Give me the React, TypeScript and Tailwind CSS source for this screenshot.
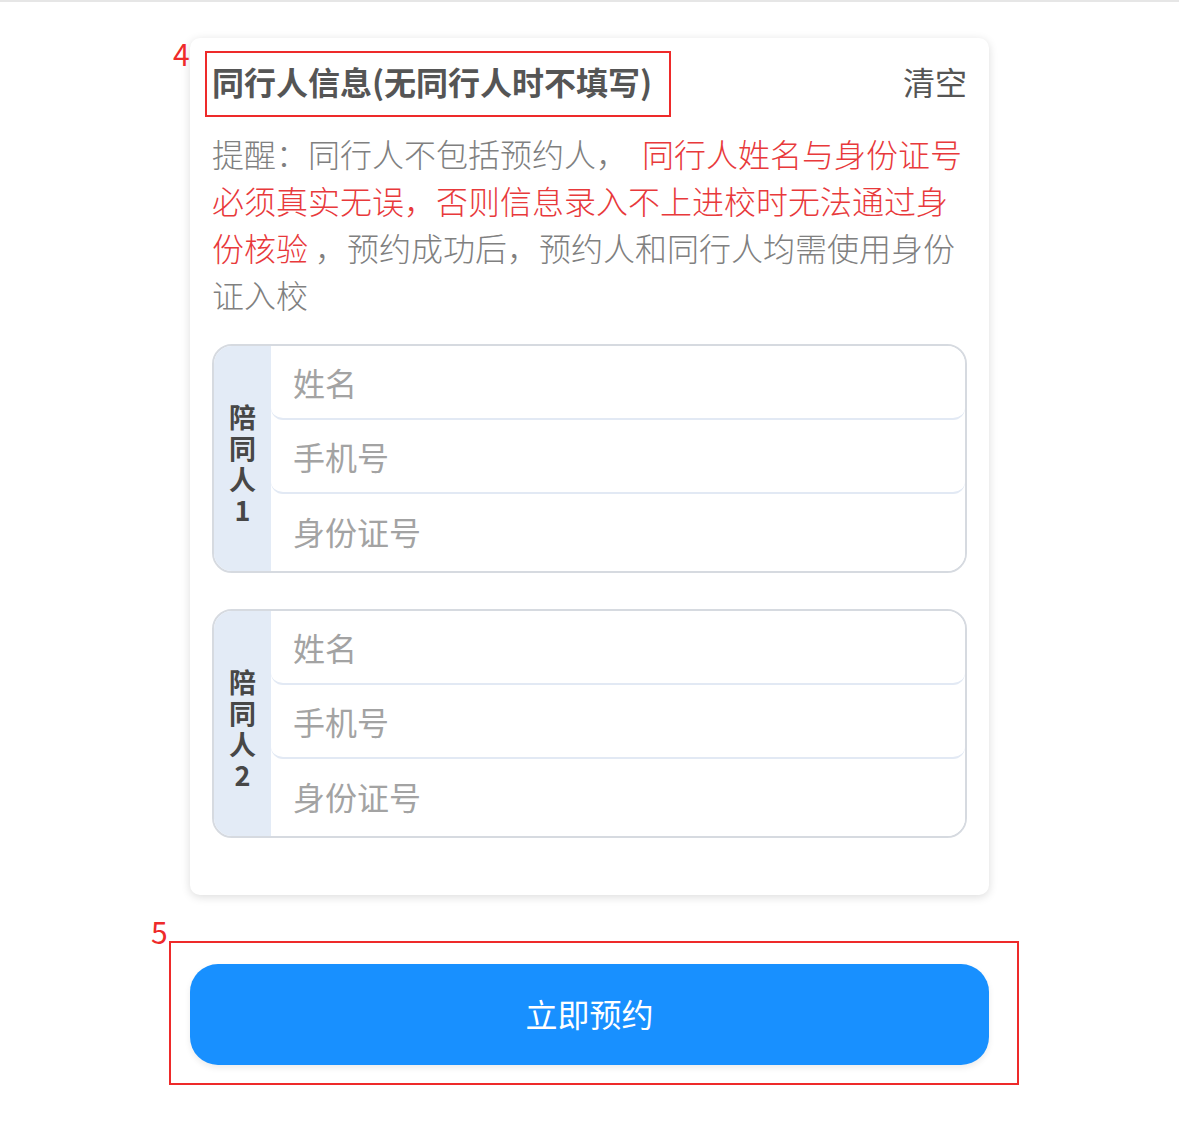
import React from "react";

const font = { fontFamily: '"Noto Sans CJK SC", "Noto Sans", sans-serif' };

function Companion({ n }: { n: number }) {
  return (
    <div className="flex h-[229px] rounded-[20px] border-2 border-[#d6dae0] overflow-hidden">
      <div className="w-[57px] bg-[#e3ebf6] flex flex-col items-center justify-center pt-[8px] text-[27px] leading-[31px] font-bold text-[#474747]">
        <span>陪</span>
        <span>同</span>
        <span>人</span>
        <span>{n}</span>
      </div>
      <div className="flex-1 flex flex-col bg-white">
        <div className="h-[74px] rounded-b-[12px] border-b-2 border-[#e2e9f4] flex items-center pl-[22px]">
          <input
            className="w-full bg-transparent outline-none text-[32px] text-[#333] placeholder:text-[#a3a3a3]"
            placeholder="姓名"
          />
        </div>
        <div className="h-[74px] rounded-b-[12px] border-b-2 border-[#e2e9f4] flex items-center pl-[22px]">
          <input
            className="w-full bg-transparent outline-none text-[32px] text-[#333] placeholder:text-[#a3a3a3]"
            placeholder="手机号"
          />
        </div>
        <div className="flex-1 flex items-center pl-[22px] pb-[4px]">
          <input
            className="w-full bg-transparent outline-none text-[32px] text-[#333] placeholder:text-[#a3a3a3]"
            placeholder="身份证号"
          />
        </div>
      </div>
    </div>
  );
}

export default function App() {
  return (
    <div
      className="relative w-[1179px] h-[1141px] bg-white border-t-2 border-[#e6e6e6] overflow-hidden"
      style={font}
    >
      <div className="ml-[190px] mt-[36px] w-[799px] rounded-[10px] bg-white shadow-[0_2px_10px_rgba(0,0,0,0.14)] px-[22px] pt-[19px] pb-[57px]">
        <div className="flex items-center justify-between h-[47px]">
          <span className="text-[32px] font-bold text-[#555]">同行人信息(无同行人时不填写)</span>
          <span className="text-[32px] text-[#555]">清空</span>
        </div>
        <p className="mt-[26px] text-[32px] leading-[47px] text-[#808080] font-light">
          提醒：同行人不包括预约人，
          <span className="ml-[14px] text-[#e8393b]">同行人姓名与身份证号必须真实无误，否则信息录入不上进校时无法通过身份核验</span>{" "}
          ，预约成功后，预约人和同行人均需使用身份证入校
        </p>
        <div className="mt-[26px] flex flex-col gap-[36px]">
          <Companion n={1} />
          <Companion n={2} />
        </div>
      </div>
      <button className="mt-[69px] ml-[190px] w-[799px] h-[101px] rounded-[28px] bg-[#1890ff] text-white text-[32px] shadow-[0_3px_6px_rgba(0,0,0,0.08)] flex items-center justify-center pb-[4px]">
        立即预约
      </button>

      {/* annotations */}
      <div className="absolute left-[205px] top-[49px] w-[466px] h-[66px] border-2 border-[#ee2a2a] pointer-events-none" />
      <div className="absolute left-[173px] top-[36px] text-[30px] leading-none text-[#ee2a2a]">4</div>
      <div className="absolute left-[169px] top-[939px] w-[850px] h-[144px] border-2 border-[#ee2a2a] pointer-events-none" />
      <div className="absolute left-[151px] top-[914px] text-[30px] leading-none text-[#ee2a2a]">5</div>
    </div>
  );
}
